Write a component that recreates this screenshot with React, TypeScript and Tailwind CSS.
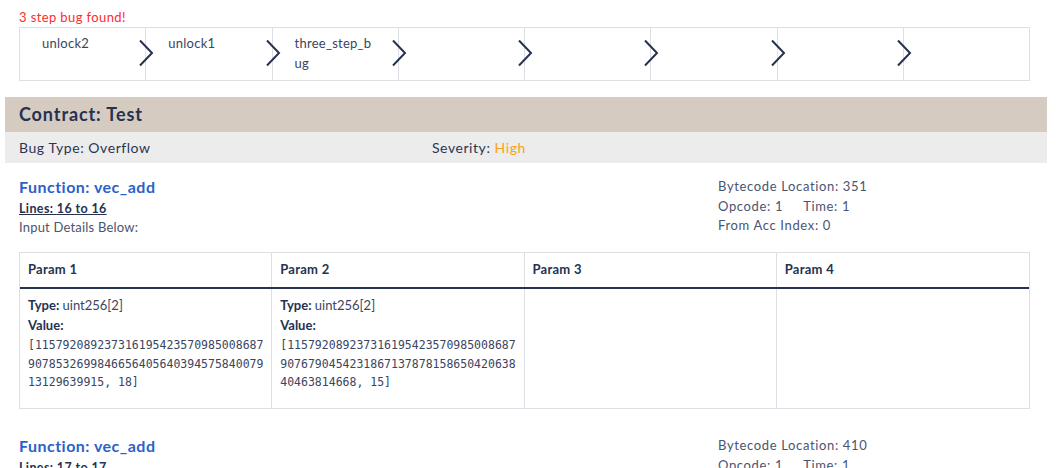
const steps = ["unlock2", "unlock1", "three_step_bug", "", "", "", "", ""];

type Param = { type: string; value: string } | null;

const bugs = [
  {
    fn: "vec_add",
    lines: "16 to 16",
    location: 351,
    opcode: 1,
    time: 1,
    accIndex: 0,
    params: [
      {
        type: "uint256[2]",
        value:
          "[115792089237316195423570985008687907853269984665640564039457584007913129639915, 18]",
      },
      {
        type: "uint256[2]",
        value:
          "[115792089237316195423570985008687907679045423186713787815865042063840463814668, 15]",
      },
      null,
      null,
    ] as Param[],
  },
  {
    fn: "vec_add",
    lines: "17 to 17",
    location: 410,
    opcode: 1,
    time: 1,
    accIndex: 0,
    params: [null, null, null, null] as Param[],
  },
];

function Chevron() {
  return (
    <svg width="16" height="28" viewBox="0 0 16 28" fill="none" aria-hidden>
      <path d="M2 1.5 L14 14 L2 26.5" stroke="#253250" strokeWidth="2" />
    </svg>
  );
}

export default function App() {
  return (
    <div className="min-h-[468px] bg-white text-[#2b3552] font-['Lato','Open_Sans',sans-serif]">
      <div className="ml-[5px] w-[1042px]">
        <div className="pl-[14px] pr-[17px]">
          <p className="pt-[8px] text-[13px] leading-[18px] tracking-[0.03em] text-[#ff2b2b]">
            3 step bug found!
          </p>
          <div className="mt-[1px] flex h-[54px] border border-[#dcdfe4]">
            {steps.map((s, i) => (
              <div
                key={i}
                className={`relative flex-1 ${i < steps.length - 1 ? "border-r border-[#dcdfe4]" : ""}`}
              >
                <div className="w-[104px] pl-[22px] pt-[5px] text-[13px] leading-[20px] tracking-[0.02em] text-[#3a4562] break-all">
                  {s}
                </div>
                {i < steps.length - 1 ? (
                  <div className="absolute right-[-9px] top-[11px]">
                    <Chevron />
                  </div>
                ) : null}
              </div>
            ))}
          </div>
        </div>

        <div className="mt-[16px] flex h-[35px] items-center bg-[#d6cbc1] pl-[14px] text-[18px] font-bold tracking-[0.05em] text-[#253250]">
          Contract: Test
        </div>
        <div className="flex h-[31px] items-center bg-[#ececec] pl-[14px] text-[14px] tracking-[0.04em] text-[#2b3552]">
          <span className="w-[413px]">Bug Type: Overflow</span>
          <span>
            Severity: <span className="text-[#f6a219]">High</span>
          </span>
        </div>

        {bugs.map((b, bi) => (
          <div key={bi} className={`pl-[14px] pr-[17px] ${bi === 0 ? "pt-[13px]" : "pt-[26px]"}`}>
            <div className="flex">
              <div className="w-[699px]">
                <h3 className="text-[16px] leading-[22px] font-bold tracking-[0.03em] text-[#2c62c8]">
                  Function: {b.fn}
                </h3>
                <p className="mt-[1px] text-[12.5px] leading-[19px] font-bold tracking-[0.03em] underline text-[#253250]">
                  Lines: {b.lines}
                </p>
                <p className="text-[13px] leading-[19px] tracking-[0.015em] text-[#4a5470]">
                  Input Details Below:
                </p>
              </div>
              <div className="pt-[1px] text-[13px] leading-[19.5px] tracking-[0.05em] text-[#4a5470]">
                <p>Bytecode Location: {b.location}</p>
                <p>
                  Opcode: {b.opcode}
                  <span className="ml-[20px]">Time: {b.time}</span>
                </p>
                <p>From Acc Index: {b.accIndex}</p>
              </div>
            </div>

            <div className="mt-[15px] border border-[#dcdfe4]">
              <div className="grid grid-cols-4 border-b-2 border-[#253250]">
                {[1, 2, 3, 4].map((n) => (
                  <div
                    key={n}
                    className={`h-[34px] flex items-center pl-[8px] text-[13px] font-bold tracking-[0.02em] text-[#253250] ${n < 4 ? "border-r border-[#dcdfe4]" : ""}`}
                  >
                    Param {n}
                  </div>
                ))}
              </div>
              <div className="grid grid-cols-4">
                {b.params.map((p, i) => (
                  <div
                    key={i}
                    className={`min-h-[119px] pl-[8px] pr-[5px] pt-[6px] pb-[8px] ${i < 3 ? "border-r border-[#dcdfe4]" : ""}`}
                  >
                    {p ? (
                      <>
                        <p className="text-[13px] leading-[20px] text-[#3a4562]">
                          <span className="font-bold text-[#253250]">Type:</span> {p.type}
                        </p>
                        <p className="text-[13px] leading-[20px] font-bold text-[#253250]">Value:</p>
                        <p className="mt-[1px] break-all font-['DejaVu_Sans_Mono',monospace] text-[11.5px] leading-[18.5px] text-[#3a4562]">
                          {p.value}
                        </p>
                      </>
                    ) : null}
                  </div>
                ))}
              </div>
            </div>
          </div>
        ))}
      </div>
    </div>
  );
}
